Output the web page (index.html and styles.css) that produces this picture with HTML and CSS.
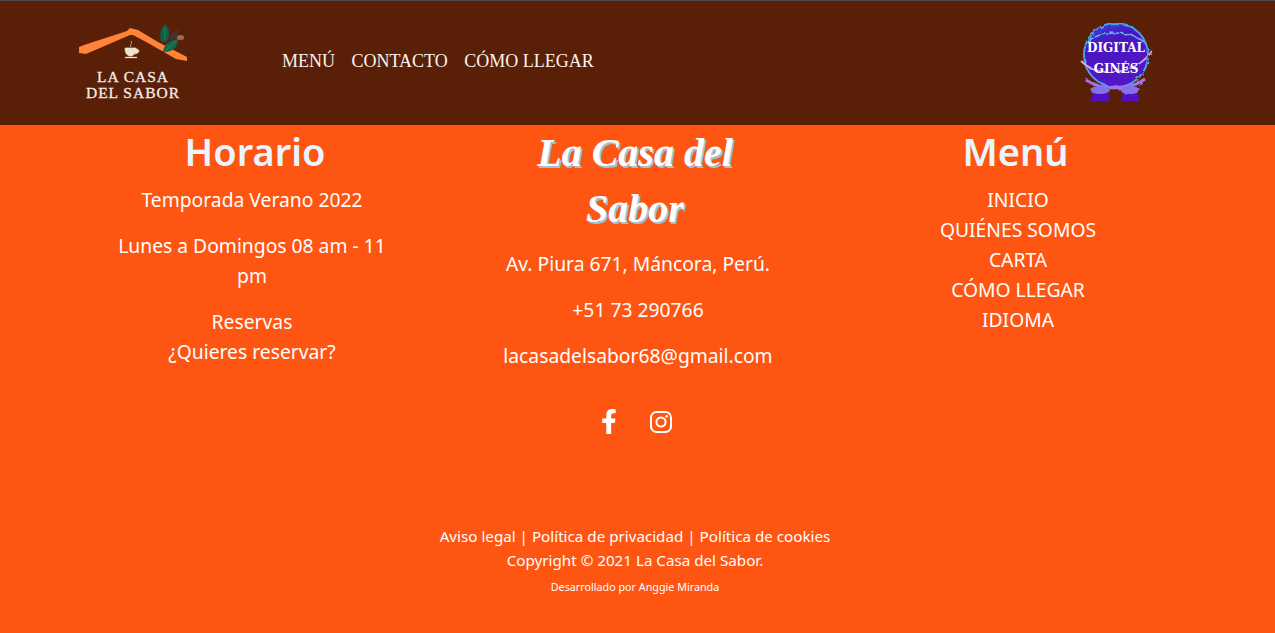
FILE: index.html
```html
<!DOCTYPE html>
<html lang="es">
<head>
<meta charset="utf-8">
<title>La Casa del Sabor</title>
<link rel="stylesheet" href="styles.css">
</head>
<body>
<header class="topbar">
  <div class="brand">
    <svg class="brand-roof" viewBox="0 0 110 44" width="110" height="44" aria-hidden="true">
      <path d="M1 23 L6 21 L49 7 L52 4 L60 6 L80 18 L109 33 L109 37 L98 35 L70 19 L55 11 L52 11 L8 30 L1 29Z" fill="#ff8339"/>
      <path d="M84 18 C80 12 83 4 87 0 C92 4 93 12 88 18Z" fill="#0f5f48"/>
      <path d="M91 15 C92 10 96 7 101 5 C101 10 98 14 93 16Z" fill="#433233"/>
      <path d="M85 28 C85 21 92 16 100 15 C100 23 94 29 85 28Z" fill="#0f6a4e"/>
      <path d="M87 27 L98 17 M87 16 L87 3" stroke="#3f9277" stroke-width=".6"/>
      <ellipse cx="102.500" cy="13.500" rx="3.700" ry="2.500" fill="#9a6b57"/>
      <path d="M47 24 H58 C58 29 56 31 54 32 H51 C49 31 47 29 47 24Z M58 25 C62 25 62 29 57 30" fill="#efe3d2" stroke="#efe3d2" stroke-width=".7"/>
      <path d="M47 33.500 H59" stroke="#efe3d2" stroke-width="1.300"/>
      <path d="M53 23 C51 21 55 20 53 17" fill="none" stroke="#b9a48f" stroke-width="1"/>
    </svg>
    <div class="brand-name">LA CASA<br>DEL SABOR</div>
  </div>
  <nav class="main-nav">
    <a href="#">MENÚ</a>
    <a href="#">CONTACTO</a>
    <a href="#">CÓMO LLEGAR</a>
  </nav>
  <div class="partner">
    <svg class="partner-orb" viewBox="0 0 74 80" width="74" height="80" aria-hidden="true">
      <defs>
        <linearGradient id="orb" x1="0.300" y1="0" x2="0.700" y2="1">
          <stop offset="0" stop-color="#3a3cd4"/>
          <stop offset=".3" stop-color="#4a12c0"/>
          <stop offset="1" stop-color="#5414c8"/>
        </linearGradient>
        <filter id="rough" x="-10%" y="-10%" width="120%" height="120%">
          <feTurbulence type="fractalNoise" baseFrequency="0.18" numOctaves="2" seed="4"/>
          <feDisplacementMap in="SourceGraphic" scale="4"/>
        </filter>
      </defs>
      <path d="M14 70 H29 L31 78 H12Z M44 70 H58 L61 78 H42Z" fill="#5210c0"/>
      <g filter="url(#rough)">
        <circle cx="37" cy="32" r="32" fill="url(#orb)" stroke="#4aa0e6" stroke-width="2"/>
        <path d="M9 18 C22 8 50 6 66 20" fill="none" stroke="#6cb6f0" stroke-width="1.500"/>
        <path d="M2 38 C20 56 56 52 73 28" fill="none" stroke="#d9a2ee" stroke-width="1.800"/>
        <path d="M6 56 C22 68 50 68 66 56" fill="none" stroke="#a870ec" stroke-width="3"/>
        <ellipse cx="21" cy="67" rx="10" ry="4" fill="#7f72ea"/>
        <ellipse cx="51" cy="67" rx="10" ry="4" fill="#7f72ea"/>
      </g>
    </svg>
    <div class="partner-name">DIGITAL<br>GINÉS</div>
  </div>
</header>
<main class="site-footer">
  <div class="columns">
    <section class="col col-hours">
      <h2 class="col-title">Horario</h2>
      <p>Temporada Verano 2022</p>
      <p>Lunes a Domingos 08 am - 11 pm</p>
      <p>Reservas<br>¿Quieres reservar?</p>
    </section>
    <section class="col col-info">
      <h2 class="script-title">La Casa del Sabor</h2>
      <p>Av. Piura 671, Máncora, Perú.</p>
      <p>+51 73 290766</p>
      <p>lacasadelsabor68@gmail.com</p>
      <div class="social">
        <svg viewBox="0 0 320 512" width="16" height="25" aria-hidden="true"><path fill="#fff" d="M279 288l14-93h-89v-60c0-25 12-50 52-50h41V6S260 0 225 0c-73 0-121 44-121 125v70H22v93h82v224h100V288z"/></svg>
        <svg viewBox="0 0 24 24" width="24" height="24" aria-hidden="true"><rect x="2" y="2" width="20" height="20" rx="5.500" fill="none" stroke="#fff" stroke-width="2"/><circle cx="12" cy="12" r="4.600" fill="none" stroke="#fff" stroke-width="2"/><circle cx="17.700" cy="6.300" r="1.300" fill="#fff"/></svg>
      </div>
    </section>
    <section class="col col-menu">
      <h2 class="col-title">Menú</h2>
      <ul class="menu-list">
        <li>INICIO</li>
        <li>QUIÉNES SOMOS</li>
        <li>CARTA</li>
        <li>CÓMO LLEGAR</li>
        <li>IDIOMA</li>
      </ul>
    </section>
  </div>
  <div class="legal">
    <div>Aviso legal | Política de privacidad | Política de cookies</div>
    <div>Copyright © 2021 La Casa del Sabor.</div>
    <div class="credit">Desarrollado por Anggie Miranda</div>
  </div>
</main>
</body>
</html>
```
FILE: styles.css
```css
* { box-sizing: border-box; }
html, body { margin: 0; height: 100%; }
body {
  background: #ff5512;
  color: #fff;
  font-family: "Noto Sans", "Open Sans", sans-serif;
  overflow: hidden;
}
.topbar {
  height: 125px;
  background: #5a1f07;
  border-top: 1px solid #4a4a4a;
  display: flex;
  align-items: center;
  padding-left: 78px;
}
.brand { width: 110px; display: flex; flex-direction: column; align-items: center; align-self: flex-start; padding-top: 23px; }
.brand-roof { display: block; margin-bottom: 1px; }
.brand-name {
  font-family: "Liberation Serif", serif;
  font-size: 15.5px;
  line-height: 16px;
  letter-spacing: 1px;
  -webkit-text-stroke: 0.3px #f4eee6;
  text-align: center;
  color: #f4eee6;
  white-space: nowrap;
}
.main-nav { display: flex; gap: 16.5px; margin: -3px 0 0 94px; font-family: "Liberation Serif", serif; font-size: 18px; }
.main-nav a { color: #fbf3ee; text-decoration: none; }
.partner { margin-left: auto; margin-right: 122px; position: relative; width: 74px; height: 80px; }
.partner-orb { display: block; }
.partner-name {
  position: absolute;
  inset: 15px 0 auto;
  font-family: "DejaVu Serif", serif;
  font-weight: 700;
  font-size: 12px;
  line-height: 21px;
  text-align: center;
  color: #fff;
}
.columns {
  display: grid;
  grid-template-columns: 290px 300px 278px;
  column-gap: 91px;
  padding-left: 107px;
  height: 399px;
  text-align: center;
}
.col p { margin: 0 0 16px; font-size: 19.3px; line-height: 30px; }
.col-title { margin: -2px 0 6px; font-size: 38px; line-height: 56px; font-weight: 600; color: #eaf6ff; }
.col-hours .col-title { padding-left: 6px; }
.col-menu .col-title { padding-right: 5px; }
.script-title {
  margin: 0 0 12px;
  padding: 0 51px 0 45px;
  font-family: "Liberation Serif", serif;
  font-style: italic;
  font-weight: 700;
  font-size: 40px;
  line-height: 56px;
  text-shadow: 2px 2px 0 #9fc3d6;
}
.social { display: flex; justify-content: center; align-items: center; gap: 32px; margin-top: 38px; padding-right: 3px; }
.menu-list { list-style: none; margin: 0; padding: 0; font-size: 19.3px; line-height: 30px; }
.legal { text-align: center; font-size: 15.2px; line-height: 24px; margin-left: -5px; }
.legal .credit { font-size: 10.75px; line-height: 30px; }
```
